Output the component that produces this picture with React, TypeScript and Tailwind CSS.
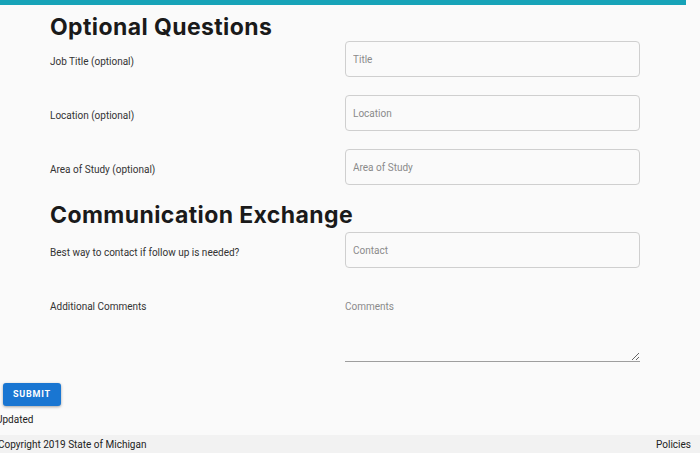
import React from "react";

const roboto = { fontFamily: "Roboto, 'Liberation Sans', sans-serif" };

function Row({ label, placeholder }: { label: string; placeholder: string }) {
  return (
    <div className="grid grid-cols-2 h-[54px]">
      <div className="pt-[13px] text-[10px] text-[#333]">{label}</div>
      <div>
        <input
          placeholder={placeholder}
          className="w-full h-[36px] border border-[#cfcfcf] rounded-[4px] bg-[#fafafa] px-[7px] text-[10px] placeholder:text-[#8a8a8a] outline-none"
        />
      </div>
    </div>
  );
}

export default function App() {
  return (
    <div className="w-[700px] h-[453px] bg-[#fafafa] overflow-hidden flex flex-col" style={roboto}>
      <div className="h-[5px] w-[686px] bg-[#17a3b8] shrink-0" />
      <div className="w-[640px] pl-[50px]">
        <h2 className="font-bold text-[23px] leading-[30px] mt-[7px] text-[#1a1a1a] tracking-[0.4px]" style={{ fontFamily: "Inter, sans-serif" }}>
          Optional Questions
        </h2>
        <div className="mt-[-1px]">
          <Row label="Job Title (optional)" placeholder="Title" />
          <Row label="Location (optional)" placeholder="Location" />
          <Row label="Area of Study (optional)" placeholder="Area of Study" />
        </div>
        <h2 className="font-bold text-[23px] leading-[30px] mt-[-3px] text-[#1a1a1a] tracking-[0.4px]" style={{ fontFamily: "Inter, sans-serif" }}>
          Communication Exchange
        </h2>
        <div className="mt-[2px]">
          <Row label="Best way to contact if follow up is needed?" placeholder="Contact" />
        </div>
        <div className="grid grid-cols-2 mt-[11px]">
          <div className="pt-[2px] text-[10px] text-[#333]">Additional Comments</div>
          <textarea
            placeholder="Comments"
            className="w-full h-[65px] border-0 border-b border-[#9e9e9e] bg-transparent pt-[2px] text-[10px] placeholder:text-[#8a8a8a] outline-none"
          />
        </div>
      </div>
      <div className="pl-[3px] mt-[18px]">
        <button className="h-[23px] w-[58px] rounded-[3px] bg-[#1976d2] text-white text-[9px] font-bold tracking-[0.8px] shadow-[0_1px_3px_rgba(0,0,0,0.35)]">
          SUBMIT
        </button>
      </div>
      <div className="ml-[-4px] mt-[7px] text-[10px] text-[#222] leading-[14px]">Updated</div>
      <div className="mt-[auto] h-[18px] bg-[#f2f2f2] flex items-center justify-between pr-[9px] ml-[-2px] text-[10px] text-[#222]">
        <span>Copyright 2019 State of Michigan</span>
        <span>Policies</span>
      </div>
    </div>
  );
}
